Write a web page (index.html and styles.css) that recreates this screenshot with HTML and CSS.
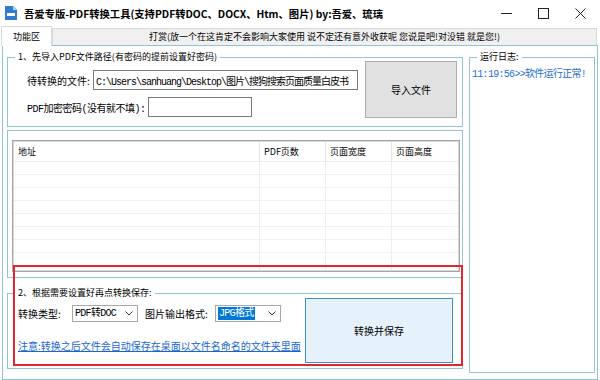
FILE: index.html
```html
<!DOCTYPE html>
<html lang="zh-CN">
<head>
  <meta charset="UTF-8">
  <title>PDF转换工具</title>
  <link rel="stylesheet" href="styles.css">
</head>
<body>
  <div class="window">
    <div class="titlebar">
      <svg class="app-icon" viewBox="0 0 12 14">
        <path d="M0 0h8l4 4v10H0z" fill="#2f7dd1"/>
        <path d="M8 0v4h4z" fill="#a9d0f5"/>
        <rect x="2" y="7" width="8" height="3" fill="#fff"/>
      </svg>
      <span class="title">吾爱专版-PDF转换工具(支持PDF转DOC、DOCX、Htm、图片) by:吾爱、琉璃</span>
      <div class="controls">
        <span class="ctl"><svg width="11" height="11"><path d="M0 5.5h11" stroke="#222"/></svg></span>
        <span class="ctl"><svg width="11" height="11"><rect x="0.5" y="0.5" width="10" height="10" fill="none" stroke="#222"/></svg></span>
        <span class="ctl"><svg width="11" height="11"><path d="M0.5 0.5l10 10M10.5 0.5l-10 10" stroke="#222"/></svg></span>
      </div>
    </div>

    <div class="tabs">
      <div class="tab tab-active">功能区</div>
      <div class="tab">打赏(放一个在这肯定不会影响大家使用 说不定还有意外收获呢 您说是吧!对没错 就是您!)</div>
    </div>

    <div class="tab-page">
      <div class="left">
        <fieldset class="group group-import">
          <legend>1、先导入PDF文件路径(有密码的提前设置好密码)</legend>
          <div class="import-body">
            <div class="fields">
              <div class="field">
                <label class="lbl lbl-file">待转换的文件:</label>
                <input class="text path" value="C:\Users\sanhuang\Desktop\图片\搜狗搜索页面质量白皮书">
              </div>
              <div class="field">
                <label class="lbl lbl-pwd">PDF加密密码(没有就不填):</label>
                <input class="text pwd" value="">
              </div>
            </div>
            <button class="btn btn-import">导入文件</button>
          </div>
        </fieldset>

        <fieldset class="group group-list">
          <div class="list-wrap">
            <div class="list">
              <div class="list-head">
                <div class="cell">地址</div>
                <div class="cell">PDF页数</div>
                <div class="cell">页面宽度</div>
                <div class="cell">页面高度</div>
              </div>
              <div class="list-body">
                <div class="col"></div>
                <div class="col"></div>
                <div class="col"></div>
                <div class="col"></div>
              </div>
            </div>
          </div>
        </fieldset>

        <fieldset class="group group-convert">
          <legend>2、根据需要设置好再点转换保存:</legend>
          <div class="convert-body">
            <div class="convert-opts">
              <div class="opt-row">
                <span class="lbl lbl-type">转换类型:</span>
                <div class="combo">
                  <span class="combo-val">PDF转DOC</span>
                  <svg class="chev" width="8" height="5"><path d="M0.5 0.5l3.5 3.5 3.5-3.5" fill="none" stroke="#333"/></svg>
                </div>
                <span class="lbl lbl-img">图片输出格式:</span>
                <div class="combo">
                  <span class="combo-val selected">JPG格式</span>
                  <svg class="chev" width="8" height="5"><path d="M0.5 0.5l3.5 3.5 3.5-3.5" fill="none" stroke="#333"/></svg>
                </div>
              </div>
              <a class="note" href="#">注意:转换之后文件会自动保存在桌面以文件名命名的文件夹里面</a>
            </div>
            <button class="btn btn-convert">转换并保存</button>
          </div>
        </fieldset>
      </div>

      <fieldset class="group group-log">
        <legend>运行日志:</legend>
        <div class="log">11:19:56&gt;&gt;软件运行正常!</div>
      </fieldset>
    </div>

    <div class="annotation"></div>
  </div>
</body>
</html>
```

FILE: styles.css
```css
body {
  margin: 0;
  font-family: "Noto Sans CJK SC", sans-serif;
  font-size: 9px;
  color: #000;
  background: #fff;
}
.window {
  position: relative;
  width: 600px;
  height: 380px;
  overflow: hidden;
  background: #fff;
}

/* title bar */
.titlebar {
  display: flex;
  align-items: center;
  height: 26px;
}
.app-icon {
  width: 12px;
  height: 14px;
  margin: 0 7px 0 5px;
}
.title {
  font-size: 10.3px;
  font-weight: bold;
  white-space: nowrap;
}
.controls {
  display: flex;
  margin-left: auto;
  margin-right: 1px;
  height: 26px;
}
.ctl {
  width: 37px;
  display: flex;
  align-items: center;
  justify-content: center;
}

/* tabs */
.tabs {
  display: flex;
  align-items: flex-end;
  height: 19px;
  margin: 0 3px 0 1px;
}
.tab {
  flex: 1;
  height: 17px;
  line-height: 16px;
  text-align: center;
  white-space: nowrap;
  background: #f0f0f0;
  border: 1px solid #d9d9d9;
  border-bottom: none;
  box-sizing: border-box;
}
.tab-active {
  flex: none;
  width: 51px;
  height: 20px;
  line-height: 19px;
  background: #fff;
  margin-bottom: -1px;
  position: relative;
  z-index: 1;
}
.tab-page {
  display: flex;
  gap: 6px;
  height: 335px;
  margin: 0 2px;
  padding: 0 2px 0 4px;
  border: 1px solid #8fc3d6;
  box-sizing: border-box;
}
.left {
  width: 456px;
  display: flex;
  flex-direction: column;
}

/* group boxes */
.group {
  margin: 0;
  padding: 0;
  min-width: 0;
  border: 1px solid #92c4d6;
}
.group legend {
  margin-left: 7px;
  padding: 0 3px;
  font-size: 9px;
  line-height: 12px;
}
.group-import {
  margin-top: 5px;
}
.import-body {
  display: flex;
  align-items: flex-start;
  gap: 7px;
  padding: 0 5px 8px 19px;
}
.fields {
  width: 331px;
  padding-top: 7px;
  display: flex;
  flex-direction: column;
  gap: 7px;
}
.field {
  display: flex;
  align-items: center;
  height: 20px;
}
.lbl {
  font-size: 10px;
  white-space: nowrap;
}
.lbl-file {
  width: 66px;
}
.lbl-pwd {
  width: 121px;
  font-family: "Liberation Mono", "Noto Sans CJK SC", monospace;
  letter-spacing: -0.5px;
}
.text {
  height: 20px;
  box-sizing: border-box;
  border: 1px solid #7a7a7a;
  padding: 0 2px;
  font-family: "Liberation Mono", "Noto Sans CJK SC", monospace;
  font-size: 10px;
  letter-spacing: -0.7px;
  color: #000;
  background: #fff;
}
.path {
  flex: 1;
  min-width: 0;
  letter-spacing: -1px;
}
.pwd {
  width: 104px;
}
.btn {
  font-family: "Noto Sans CJK SC", sans-serif;
  font-size: 10px;
  color: #000;
  padding: 0;
}
.btn-import {
  width: 92px;
  height: 57px;
  margin-top: -2px;
  background: #e1e1e1;
  border: 1px solid #adadad;
}

/* list view */
.group-list {
  margin-top: 3px;
}
.list-wrap {
  padding: 9px 2px 5px 4px;
}
.list {
  height: 132px;
  box-sizing: border-box;
  border: 1px solid #a5a5a5;
  box-shadow: inset 0 0 0 1px #d8d8d8;
  padding: 1px;
  display: flex;
  flex-direction: column;
}
.list-head,
.list-body {
  display: grid;
  grid-template-columns: 245px 66px 66px 1fr;
}
.list-head {
  height: 19px;
  border-bottom: 1px solid #ececec;
  background: #fff;
}
.list-head .cell {
  padding-left: 4px;
  line-height: 19px;
  white-space: nowrap;
}
.list-head .cell + .cell {
  border-left: 1px solid #e5e5e5;
}
.list-body {
  flex: 1;
  background: repeating-linear-gradient(#fff 0 12px, #f1f1f1 12px 13px);
}
.list-body .col + .col {
  border-left: 1px solid #eeeeee;
}

/* convert settings */
.group-convert {
  margin-top: 9px;
}
.convert-body {
  display: flex;
  align-items: flex-start;
  padding: 0 9px 5px 10px;
}
.convert-opts {
  flex: 1;
  padding-top: 6px;
}
.opt-row {
  display: flex;
  align-items: center;
  height: 17px;
}
.lbl-type {
  width: 54px;
}
.lbl-img {
  width: 70px;
  margin-left: 7px;
}
.combo {
  width: 66px;
  height: 17px;
  box-sizing: border-box;
  border: 1px solid #a8a8a8;
  padding-left: 2px;
  display: flex;
  align-items: center;
  font-family: "Liberation Mono", "Noto Sans CJK SC", monospace;
  font-size: 10px;
  letter-spacing: -0.7px;
  white-space: nowrap;
}
.combo-val {
  line-height: 13px;
}
.combo-val.selected {
  background: #0078d7;
  color: #fff;
  padding: 0 1px;
}
.chev {
  margin-left: auto;
  margin-right: 4px;
}
.note {
  display: block;
  margin-top: 18px;
  line-height: 12px;
  font-size: 10px;
  color: #1a66d0;
  white-space: nowrap;
}
.btn-convert {
  width: 148px;
  height: 65px;
  margin-top: -1px;
  background: #e5f1fb;
  border: 1px solid #3f8fd0;
}

/* log */
.group-log {
  width: 126px;
  height: 322px;
  margin-top: 5px;
  box-sizing: border-box;
}
.log {
  padding: 2px 2px;
  color: #1e6fd0;
  font-family: "Liberation Mono", "Noto Sans CJK SC", monospace;
  font-size: 10px;
  letter-spacing: -0.7px;
  white-space: nowrap;
}

/* red highlight drawn over the settings area */
.annotation {
  position: absolute;
  left: 13px;
  top: 265px;
  width: 450px;
  height: 101px;
  border: 2px solid #e3262b;
  box-sizing: border-box;
}
```
